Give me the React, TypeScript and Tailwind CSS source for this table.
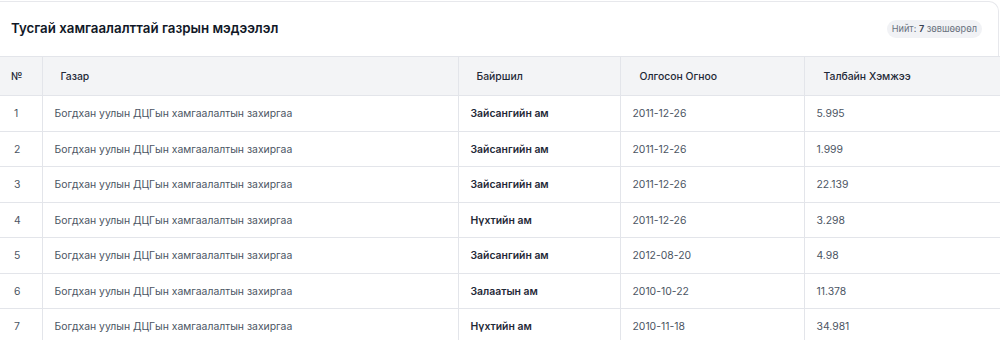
const rows = [
  { place: 'Богдхан уулын ДЦГын хамгаалалтын захиргаа', loc: 'Зайсангийн ам', date: '2011-12-26', area: '5.995' },
  { place: 'Богдхан уулын ДЦГын хамгаалалтын захиргаа', loc: 'Зайсангийн ам', date: '2011-12-26', area: '1.999' },
  { place: 'Богдхан уулын ДЦГын хамгаалалтын захиргаа', loc: 'Зайсангийн ам', date: '2011-12-26', area: '22.139' },
  { place: 'Богдхан уулын ДЦГын хамгаалалтын захиргаа', loc: 'Нүхтийн ам', date: '2011-12-26', area: '3.298' },
  { place: 'Богдхан уулын ДЦГын хамгаалалтын захиргаа', loc: 'Зайсангийн ам', date: '2012-08-20', area: '4.98' },
  { place: 'Богдхан уулын ДЦГын хамгаалалтын захиргаа', loc: 'Залаатын ам', date: '2010-10-22', area: '11.378' },
  { place: 'Богдхан уулын ДЦГын хамгаалалтын захиргаа', loc: 'Нүхтийн ам', date: '2010-11-18', area: '34.981' },
];

export default function App() {
  return (
    <div className="w-[1000px] h-[340px] overflow-hidden bg-white pt-px font-['Inter',sans-serif]">
      {/* Card header */}
      <div className="w-[999px] h-[55px] flex items-center justify-between pl-[11px] pr-[16px] border-t border-r border-[#e7e8ec] rounded-tr-[10px]">
        <h2 className="text-[13.3px] font-semibold text-[#111827]">
          Тусгай хамгаалалттай газрын мэдээлэл
        </h2>
        <span className="h-[18px] px-[5px] flex items-center rounded-full bg-[#f1f2f5] text-[9.2px] text-[#6b7280]">
          Нийт:&nbsp;<span className="font-semibold text-[#374151]">7</span>&nbsp;зөвшөөрөл
        </span>
      </div>

      {/* Table */}
      <table className="w-[1000px] border-collapse table-fixed text-[10.4px]">
        <colgroup>
          <col className="w-[42px]" />
          <col className="w-[416px]" />
          <col className="w-[162px]" />
          <col className="w-[184px]" />
          <col />
        </colgroup>
        <thead>
          <tr className="bg-[#f3f4f6] h-[39px] border-y border-[#e3e5ea]">
            <th className="text-left font-medium text-[#1f2937] pl-[11px] pt-[2px] border-r border-[#e3e5ea]">№</th>
            <th className="text-left font-medium text-[#1f2937] pl-[18px] pt-[2px] border-r border-[#e3e5ea]">Газар</th>
            <th className="text-left font-medium text-[#1f2937] pl-[18px] pt-[2px] border-r border-[#e3e5ea]">Байршил</th>
            <th className="text-left font-medium text-[#1f2937] pl-[19px] pt-[2px] border-r border-[#e3e5ea]">Олгосон Огноо</th>
            <th className="text-left font-medium text-[#1f2937] pl-[19px] pt-[2px]">Талбайн Хэмжээ</th>
          </tr>
        </thead>
        <tbody>
          {rows.map((r, i) => (
            <tr key={i} className="h-[35.5px] border-b border-[#e3e5ea]">
              <td className="pl-[14px] pt-[2px] text-[#4b5563] border-r border-[#e3e5ea]">{i + 1}</td>
              <td className="pl-3 pt-[2px] text-[#4b5563] border-r border-[#e3e5ea]">{r.place}</td>
              <td className="pl-3 pt-[2px] font-semibold text-[#1f2937] border-r border-[#e3e5ea]">{r.loc}</td>
              <td className="pl-3 pt-[2px] text-[#4b5563] border-r border-[#e3e5ea]">{r.date}</td>
              <td className="pl-3 pt-[2px] text-[#4b5563]">{r.area}</td>
            </tr>
          ))}
        </tbody>
      </table>
    </div>
  );
}
